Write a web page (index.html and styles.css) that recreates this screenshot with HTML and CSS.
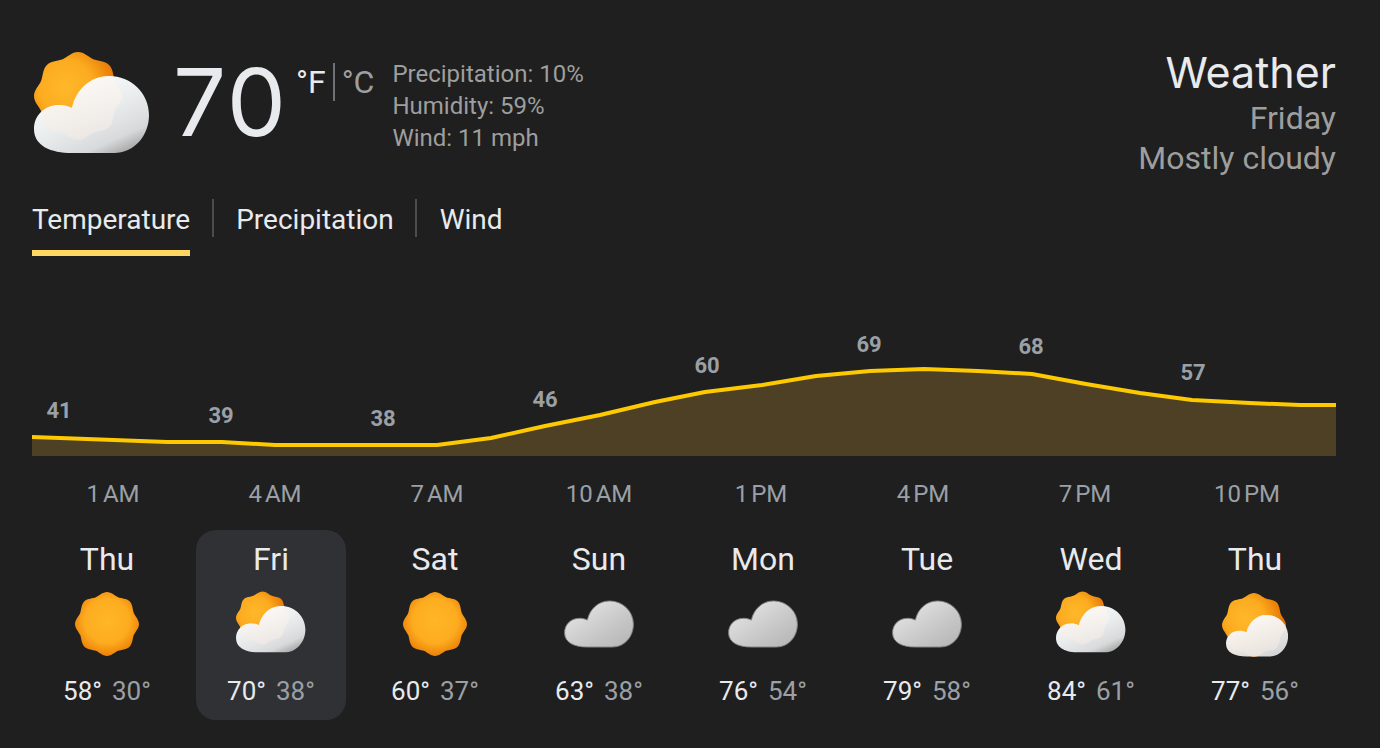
FILE: index.html
```html
<!DOCTYPE html>
<html lang="en">
<head>
<meta charset="utf-8">
<title>Weather</title>
<link rel="stylesheet" href="styles.css">
</head>
<body>
<svg class="defs" width="0" height="0" aria-hidden="true">
  <defs>
    <radialGradient id="sunBehind" cx="0.36" cy="0.4" r="0.62">
      <stop offset="0" stop-color="#ffb829"/><stop offset="0.5" stop-color="#fcab20"/><stop offset="1" stop-color="#e66f00"/>
    </radialGradient>
    <radialGradient id="sunFull" cx="0.5" cy="0.45" r="0.58">
      <stop offset="0" stop-color="#ffb627"/><stop offset="0.6" stop-color="#fdac20"/><stop offset="1" stop-color="#e97a04"/>
    </radialGradient>
    <linearGradient id="cloudWhite" x1="0.2" y1="0.05" x2="0.85" y2="1">
      <stop offset="0" stop-color="#ffffff"/><stop offset="0.5" stop-color="#e8ebec"/><stop offset="0.8" stop-color="#d8d9da"/><stop offset="1" stop-color="#9e9e9e"/>
    </linearGradient>
    <linearGradient id="cloudGrey" x1="0.1" y1="0.1" x2="0.9" y2="0.9">
      <stop offset="0" stop-color="#e6e6e6"/><stop offset="0.6" stop-color="#c9c9c9"/><stop offset="1" stop-color="#b8b8b8"/>
    </linearGradient>
    <linearGradient id="cloudSoft" x1="0.2" y1="0" x2="0.85" y2="1">
      <stop offset="0" stop-color="#ffffff"/><stop offset="0.6" stop-color="#e9e5e0"/><stop offset="1" stop-color="#ced3d7"/>
    </linearGradient>
    <linearGradient id="sunGlass" x1="0.5" y1="0.2" x2="0.5" y2="1">
      <stop offset="0" stop-color="#fff8f2"/><stop offset="1" stop-color="#f4ebe4"/>
    </linearGradient>
    <path id="sunShape" d="M32 0C36.5 0 39.87 3.87 43.1 5.21C46.33 6.55 51.45 6.19 54.63 9.37C57.81 12.55 57.45 17.67 58.79 20.9C60.13 24.13 64 27.5 64 32C64 36.5 60.13 39.87 58.79 43.1C57.45 46.33 57.81 51.45 54.63 54.63C51.45 57.81 46.33 57.45 43.1 58.79C39.87 60.13 36.5 64 32 64C27.5 64 24.13 60.13 20.9 58.79C17.67 57.45 12.55 57.81 9.37 54.63C6.19 51.45 6.55 46.33 5.21 43.1C3.87 39.87 0 36.5 0 32C0 27.5 3.87 24.13 5.21 20.9C6.55 17.67 6.19 12.55 9.37 9.37C12.55 6.19 17.67 6.55 20.9 5.21C24.13 3.87 27.5 0 32 0Z"/>
    <path id="cloudShape" d="M75 0C97 0 115 17 115 39C115 60 100 77 80 77H38C17 77 0 70 0 53C0 39 11 29 25 29C30 29 34 30 38 32C42 14 56 0 75 0Z"/>
    <clipPath id="cloudClip"><use href="#cloudShape" transform="translate(0 24)"/></clipPath>
    <clipPath id="cloudClipSm"><use href="#cloudShape" transform="translate(4 22) scale(.54)"/></clipPath>
    <symbol id="partly" viewBox="0 0 116 103">
      <use href="#sunShape" fill="url(#sunBehind)" transform="scale(1.375)"/>
      <use href="#cloudShape" fill="url(#cloudWhite)" transform="translate(0 24)"/>
      <g clip-path="url(#cloudClip)"><use href="#sunShape" fill="url(#sunGlass)" opacity=".6" transform="scale(1.375)"/></g>
    </symbol>
    <symbol id="partlyLarge" viewBox="0 0 66 64">
      <use href="#sunShape" fill="url(#sunBehind)"/>
      <use href="#cloudShape" fill="url(#cloudSoft)" transform="translate(4 22) scale(.54)"/>
      <g clip-path="url(#cloudClipSm)"><use href="#sunShape" fill="url(#sunGlass)" opacity=".5"/></g>
    </symbol>
    <symbol id="sun" viewBox="0 0 64 64">
      <use href="#sunShape" fill="url(#sunFull)"/>
    </symbol>
    <symbol id="cloud" viewBox="-1 -1 117 79">
      <use href="#cloudShape" fill="url(#cloudGrey)" stroke="#808285" stroke-width="1.6"/>
    </symbol>
  </defs>
</svg>

<main class="widget">
  <header class="top">
    <div class="now">
      <svg class="now-icon"><use href="#partly"/></svg>
      <div class="temp">70</div>
      <div class="units"><span class="unit-on">°F</span><span class="unit-sep"></span><span class="unit-off">°C</span></div>
      <ul class="stats">
        <li>Precipitation: 10%</li>
        <li>Humidity: 59%</li>
        <li>Wind: 11 mph</li>
      </ul>
    </div>
    <div class="place">
      <div class="title">Weather</div>
      <div class="sub">Friday</div>
      <div class="sub">Mostly cloudy</div>
    </div>
  </header>

  <nav class="tabs">
    <span class="tab tab-active">Temperature</span>
    <span class="tab-sep"></span>
    <span class="tab">Precipitation</span>
    <span class="tab-sep"></span>
    <span class="tab">Wind</span>
  </nav>

  <svg class="chart" viewBox="0 0 1304 196" width="1304" height="196">
    <path class="area" d="M0 177L55 179L135 182L190 182L243 185L405 185L459 178L513 166L568 155L623 142L673 132L730 125L784 116L838 111L892 109L946 111L1000 114L1054 124L1108 133L1160 140L1218 143L1268 145L1304 145V196H0Z"/>
    <path class="line" d="M0 177L55 179L135 182L190 182L243 185L405 185L459 178L513 166L568 155L623 142L673 132L730 125L784 116L838 111L892 109L946 111L1000 114L1054 124L1108 133L1160 140L1218 143L1268 145L1304 145"/>
    <g class="chart-nums">
      <text x="27" y="158">41</text>
      <text x="189" y="163">39</text>
      <text x="351" y="166">38</text>
      <text x="513" y="147">46</text>
      <text x="675" y="113">60</text>
      <text x="837" y="92">69</text>
      <text x="999" y="94">68</text>
      <text x="1161" y="120">57</text>
    </g>
  </svg>

  <div class="times">
    <span>1 AM</span><span>4 AM</span><span>7 AM</span><span>10 AM</span><span>1 PM</span><span>4 PM</span><span>7 PM</span><span>10 PM</span>
  </div>

  <section class="days">
    <div class="day"><div class="day-name">Thu</div><div class="ic-box"><svg class="ic ic-sun"><use href="#sun"/></svg></div><div class="range"><b>58°</b><i>30°</i></div></div>
    <div class="day day-active"><div class="day-name">Fri</div><div class="ic-box"><svg class="ic ic-partly"><use href="#partly"/></svg></div><div class="range"><b>70°</b><i>38°</i></div></div>
    <div class="day"><div class="day-name">Sat</div><div class="ic-box"><svg class="ic ic-sun"><use href="#sun"/></svg></div><div class="range"><b>60°</b><i>37°</i></div></div>
    <div class="day"><div class="day-name">Sun</div><div class="ic-box"><svg class="ic ic-cloud"><use href="#cloud"/></svg></div><div class="range"><b>63°</b><i>38°</i></div></div>
    <div class="day"><div class="day-name">Mon</div><div class="ic-box"><svg class="ic ic-cloud"><use href="#cloud"/></svg></div><div class="range"><b>76°</b><i>54°</i></div></div>
    <div class="day"><div class="day-name">Tue</div><div class="ic-box"><svg class="ic ic-cloud"><use href="#cloud"/></svg></div><div class="range"><b>79°</b><i>58°</i></div></div>
    <div class="day"><div class="day-name">Wed</div><div class="ic-box"><svg class="ic ic-partly"><use href="#partly"/></svg></div><div class="range"><b>84°</b><i>61°</i></div></div>
    <div class="day"><div class="day-name">Thu</div><div class="ic-box"><svg class="ic ic-large"><use href="#partlyLarge"/></svg></div><div class="range"><b>77°</b><i>56°</i></div></div>
  </section>
</main>
</body>
</html>
```

FILE: styles.css
```css
* { box-sizing: border-box; }
html, body { margin: 0; height: 100%; }
body {
  background: #1f1f1f;
  color: #e8eaed;
  font-family: Roboto, "Liberation Sans", sans-serif;
  overflow: hidden;
}
.defs { position: absolute; }
.widget { width: 1380px; height: 748px; padding: 46px 44px 0 32px; }

.top { display: flex; justify-content: space-between; height: 129px; margin-bottom: 24px; }
.now { display: flex; align-items: flex-start; }
.now-icon { width: 116px; height: 103px; margin: 6px 0 0 2px; flex: none; }
.temp {
  font-family: Inter, Roboto, sans-serif;
  font-weight: 400;
  font-size: 94px;
  line-height: 112px;
  letter-spacing: 2px;
  margin-left: 23px;
  width: 123px;
}
.units { display: flex; align-items: flex-start; margin-top: 17px; font-size: 32px; line-height: 38px; }
.unit-on { color: #e8eaed; }
.unit-off { color: #9e9e9e; }
.unit-sep { width: 2px; height: 38px; background: #6f7175; margin: 0 7px; }
.stats { list-style: none; margin: 12px 0 0 18px; padding: 0; font-size: 24px; line-height: 32px; color: #9e9e9e; }

.place { text-align: right; }
.title { font-family: Inter, Roboto, sans-serif; font-size: 43px; line-height: 52px; color: #e8eaed; }
.sub { font-size: 32px; line-height: 40px; color: #9e9e9e; }

.tabs { display: flex; align-items: flex-start; height: 61px; }
.tab { font-size: 28px; line-height: 36px; padding-top: 3px; color: #e8eaed; }
.tab-active { height: 57px; border-bottom: 6px solid #fdd663; }
.tab-sep { width: 2px; height: 38px; background: #4a4c50; margin: 0 22.5px 0 21.5px; }

.chart { display: block; }
.area { fill: #4d4024; }
.line { fill: none; stroke: #fdc900; stroke-width: 4; stroke-linejoin: round; }
.chart-nums text { fill: #9aa0a6; font-size: 22px; font-weight: 700; text-anchor: middle; }

.times {
  display: grid;
  grid-template-columns: repeat(8, 162px);
  margin-top: 24px;
  font-size: 24px;
  line-height: 28px;
  word-spacing: -3px;
  color: #9aa0a6;
  text-align: center;
}

.days { display: grid; grid-template-columns: repeat(8, 150px); column-gap: 14px; margin-top: 22px; }
.day { height: 190px; border-radius: 20px; display: flex; flex-direction: column; align-items: center; padding-top: 10px; }
.day-active { background: #303134; }
.day-name { font-size: 32px; line-height: 38px; color: #e8eaed; }
.ic-box { height: 70px; margin-top: 12px; flex: none; }
.ic { display: block; }
.ic-sun { width: 64px; height: 64px; margin-top: 2px; }
.ic-partly { width: 70px; height: 63px; margin-top: 1px; }
.ic-cloud { width: 70px; height: 48px; margin-top: 10px; }
.ic-large { width: 66px; height: 64px; margin-top: 3px; }
.range { display: flex; gap: 10px; margin-top: 15px; font-size: 26px; line-height: 32px; }
.range b { font-weight: 400; color: #e8eaed; }
.range i { font-style: normal; color: #9aa0a6; }
```
